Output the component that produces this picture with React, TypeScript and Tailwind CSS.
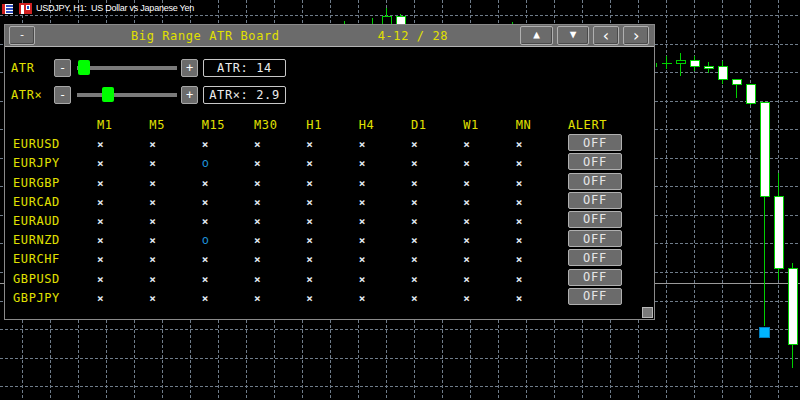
import React from 'react';

const mono = { fontFamily: '"DejaVu Sans Mono", "Liberation Mono", monospace' };

const timeframes = ['M1', 'M5', 'M15', 'M30', 'H1', 'H4', 'D1', 'W1', 'MN'];

const pairs: { name: string; hits: number[] }[] = [
  { name: 'EURUSD', hits: [] },
  { name: 'EURJPY', hits: [2] },
  { name: 'EURGBP', hits: [] },
  { name: 'EURCAD', hits: [] },
  { name: 'EURAUD', hits: [] },
  { name: 'EURNZD', hits: [2] },
  { name: 'EURCHF', hits: [] },
  { name: 'GBPUSD', hits: [] },
  { name: 'GBPJPY', hits: [] },
];

// candles: x center, body top, body bottom, wick top, wick bottom, hollow
const candles: [number, number, number, number, number, boolean][] = [
  [386, 16, 30, 8, 30, true],
  [400, 16, 30, 14, 30, false],
  [680, 60, 63, 53, 76, true],
  [694, 60, 66, 56, 71, false],
  [708, 66, 68, 62, 73, false],
  [722, 66, 79, 61, 84, false],
  [736, 79, 84, 79, 98, false],
  [750, 84, 103, 84, 105, false],
  [764, 102, 196, 102, 326, false],
  [778, 196, 268, 173, 280, false],
  [792, 268, 344, 263, 368, false],
];

const gridY = [15, 44, 72, 101, 129, 158, 186, 215, 243, 272, 301, 329, 358, 386];

function ChartBackground() {
  const gridX = Array.from({ length: 28 }, (_, i) => 22 + i * 28);
  return (
    <svg className="absolute inset-0" width={800} height={400}>
      {gridX.map((x) => (
        <line key={'v' + x} x1={x + 0.5} y1={0} x2={x + 0.5} y2={400} stroke="#6f7c8a" strokeDasharray="3 2" />
      ))}
      {gridY.map((y) => (
        <line key={'h' + y} x1={0} y1={y + 0.5} x2={800} y2={y + 0.5} stroke="#6f7c8a" strokeDasharray="3 2" />
      ))}
      <line x1={0} y1={283.5} x2={800} y2={283.5} stroke="#9a9a9a" />
      {/* tiny bars */}
      <line x1={344.5} y1={21} x2={344.5} y2={30} stroke="#00d000" />
      <line x1={372.5} y1={18} x2={372.5} y2={30} stroke="#00d000" />
      <line x1={512.5} y1={22} x2={512.5} y2={30} stroke="#00d000" />
      <line x1={656.5} y1={63} x2={656.5} y2={67} stroke="#00d000" />
      <line x1={662} y1={63.5} x2={672} y2={63.5} stroke="#00d000" />
      <line x1={666.5} y1={56} x2={666.5} y2={69} stroke="#00d000" />
      {candles.map(([x, bt, bb, wt, wb, hollow]) => (
        <g key={x}>
          <line x1={x + 0.5} y1={wt} x2={x + 0.5} y2={wb} stroke="#00d000" />
          <rect
            x={x - 4 + 0.5}
            y={bt + 0.5}
            width={9}
            height={Math.max(bb - bt, 2)}
            fill={hollow ? '#000' : '#fff'}
            stroke="#00d000"
          />
        </g>
      ))}
      <rect x={759.5} y={327.5} width={10} height={10} fill="#00b4ff" stroke="#0080c0" />
    </svg>
  );
}

function ChartTitle() {
  return (
    <div className="absolute left-[2px] top-[2px] flex items-center gap-[4px]">
      <svg width={11} height={10} viewBox="0 0 11 10">
        <rect x={0} y={0} width={11} height={10} fill="#fff" />
        <rect x={0} y={0} width={3} height={10} fill="#d02020" />
        <rect x={4} y={1} width={7} height={2} fill="#3050c0" />
        <rect x={4} y={4} width={7} height={2} fill="#3050c0" />
        <rect x={4} y={7} width={7} height={2} fill="#3050c0" />
      </svg>
      <svg width={13} height={11} viewBox="0 0 13 11" className="ml-[2px]">
        <rect x={0} y={0} width={13} height={11} fill="#d02020" />
        <rect x={2} y={2} width={3} height={9} fill="#fff" />
        <rect x={7} y={2} width={4} height={5} fill="#fff" />
        <rect x={8} y={3} width={2} height={3} fill="#2050c0" />
      </svg>
      <span
        className="text-[9px] tracking-[-0.25px] text-white whitespace-pre"
        style={{ fontFamily: '"Liberation Sans", Arial, sans-serif' }}
      >
        USDJPY, H1:  US Dollar vs Japanese Yen
      </span>
    </div>
  );
}

function BarButton({ children, w, size = 'text-[11px]' }: { children: React.ReactNode; w: string; size?: string }) {
  return (
    <div
      className={`${w} ${size} h-[19px] flex items-center justify-center bg-[#6b6b6b] border border-[#b0b0b0] rounded-[2px] text-white shadow-[inset_-1px_-1px_0_#4a4a4a]`}
    >
      {children}
    </div>
  );
}

function Stepper({ label }: { label: string }) {
  return (
    <div className="w-[17px] h-[18px] flex items-center justify-center bg-[#6b6b6b] border border-[#a8a8a8] rounded-[2px] text-white text-[12px]">
      {label}
    </div>
  );
}

function SliderRow({ label, thumb, value }: { label: string; thumb: number; value: string }) {
  return (
    <div className="flex items-center h-[18px]">
      <div className="w-[43px] text-[#e1e100] text-[12px] tracking-[0.6px]">{label}</div>
      <Stepper label="-" />
      <div className="relative w-[100px] h-[4px] bg-[#7a7a7a] ml-[6px] mr-[4px]">
        <div className="absolute top-[-6px] w-[12px] h-[15px] bg-[#00ff00] rounded-[2px]" style={{ left: thumb }} />
      </div>
      <Stepper label="+" />
      <div className="w-[83px] h-[18px] ml-[5px] flex items-center justify-center border border-[#c8c8c8] rounded-[2px] text-[#ececec] text-[12px] tracking-[0.6px]">
        {value}
      </div>
    </div>
  );
}

export default function App() {
  return (
    <div className="relative w-[800px] h-[400px] bg-black overflow-hidden" style={mono}>
      <ChartBackground />
      <ChartTitle />

      <div className="absolute left-[4px] top-[24px] w-[651px] h-[296px] bg-black border border-[#8a8a8a] flex flex-col">
        <div className="h-[22px] flex items-center bg-[#6b6b6b] border-b border-[#b4b4b4]">
          <div className="ml-[4px]">
            <BarButton w="w-[26px]">-</BarButton>
          </div>
          <div className="ml-[96px] text-[#e1e100] text-[12px] tracking-[0.6px] whitespace-pre">Big Range ATR Board</div>
          <div className="ml-[98px] text-[#e1e100] text-[12px] tracking-[0.6px] whitespace-pre">4-12 / 28</div>
          <div className="ml-auto mr-[5px] flex gap-[4px]">
            <BarButton w="w-[33px]">▲</BarButton>
            <BarButton w="w-[32px]">▼</BarButton>
            <BarButton w="w-[26px]" size="text-[16px]">‹</BarButton>
            <BarButton w="w-[26px]" size="text-[16px]">›</BarButton>
          </div>
        </div>

        <div className="flex flex-col gap-[9px] pt-[12px] pl-[6px]">
          <SliderRow label="ATR" thumb={1} value="ATR: 14" />
          <SliderRow label="ATR×" thumb={25} value="ATR×: 2.9" />
        </div>

        <div className="mt-[11px] pl-[8px] grid grid-cols-[84px_repeat(9,52.33px)_54px] auto-rows-[19.2px] items-start text-[12px] tracking-[0.6px]">
          <div />
          {timeframes.map((tf) => (
            <div key={tf} className="leading-[21px] text-[#e1e100]">{tf}</div>
          ))}
          <div className="leading-[21px] text-[#e1e100]">ALERT</div>

          {pairs.map((p) => (
            <React.Fragment key={p.name}>
              <div className="leading-[21px] text-[#e1e100]">{p.name}</div>
              {timeframes.map((tf, i) =>
                p.hits.includes(i) ? (
                  <div key={tf} className="leading-[21px] text-[#1e90d8]">o</div>
                ) : (
                  <div key={tf} className="leading-[21px] text-[#e4ecf4] font-bold text-[11px]">×</div>
                ),
              )}
              <div className="h-[17px] w-[54px] flex items-center justify-center bg-[#6b6b6b] border border-[#b0b0b0] rounded-[2px] text-[#e6e6e6] tracking-[0.8px]">
                OFF
              </div>
            </React.Fragment>
          ))}
        </div>

        <div className="absolute right-[1px] bottom-[1px] w-[11px] h-[11px] bg-[#7a7a7a] border border-[#b8b8b8]" />
      </div>
    </div>
  );
}
